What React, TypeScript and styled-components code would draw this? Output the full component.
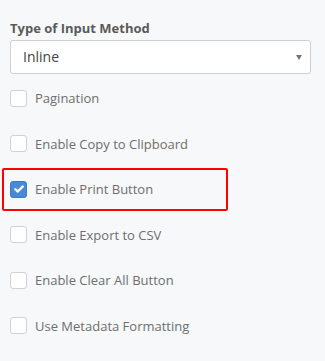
import React from "react";
import styled, { createGlobalStyle } from "styled-components";

const Global = createGlobalStyle`
  html, body { margin: 0; padding: 0; background: #f7f8fa; }
  body { font-family: "Open Sans", "Liberation Sans", sans-serif; }
`;

const Panel = styled.div`
  width: 325px;
  height: 361px;
  box-sizing: border-box;
  padding: 19px 14px 0 10px;
  background: #f7f8fa;
`;

const FieldLabel = styled.div`
  font-size: 13px;
  font-weight: 700;
  line-height: 18px;
  color: #5a5a5a;
  margin-bottom: 3px;
`;

const SelectBox = styled.div`
  position: relative;
  height: 34px;
  box-sizing: border-box;
  border: 1px solid #cfcfcf;
  border-radius: 3px;
  background: #fff;
  display: flex;
  align-items: center;
  padding: 0 0 2px 12px;
  font-size: 14px;
  color: #444;
`;

const Caret = styled.span`
  margin-left: auto;
  margin-right: 8px;
  margin-top: 2px;
  width: 0;
  height: 0;
  border-left: 3.5px solid transparent;
  border-right: 3.5px solid transparent;
  border-top: 5px solid #777;
`;

const List = styled.div`
  display: flex;
  flex-direction: column;
  gap: 25.6px;
  margin-top: 14px;
`;

const Row = styled.label<{ $highlight?: boolean }>`
  position: relative;
  display: flex;
  align-items: center;
  height: 20px;
  font-size: 13px;
  color: #6e6e6e;
  ${(p) =>
    p.$highlight &&
    `
    &::after {
      content: "";
      position: absolute;
      left: -8px;
      top: -11px;
      width: 226px;
      height: 43px;
      box-sizing: border-box;
      border: 2px solid #f00;
      border-radius: 2px;
    }
  `}
`;

const Box = styled.span<{ $checked?: boolean }>`
  width: 17px;
  height: 17px;
  box-sizing: border-box;
  border-radius: 3px;
  border: 1px solid ${(p) => (p.$checked ? "#3b7ac4" : "#d2d2d2")};
  background: ${(p) => (p.$checked ? "#4689d6" : "#fff")};
  margin-right: 8px;
  display: flex;
  align-items: center;
  justify-content: center;
  flex: none;
`;

const items = [
  { text: "Pagination" },
  { text: "Enable Copy to Clipboard" },
  { text: "Enable Print Button", checked: true, highlight: true },
  { text: "Enable Export to CSV" },
  { text: "Enable Clear All Button" },
  { text: "Use Metadata Formatting" },
];

export default function App() {
  return (
    <>
      <Global />
      <Panel>
        <FieldLabel>Type of Input Method</FieldLabel>
        <SelectBox>
          Inline
          <Caret />
        </SelectBox>
        <List>
          {items.map((it) => (
            <Row key={it.text} $highlight={it.highlight}>
              <Box $checked={it.checked}>
                {it.checked && (
                  <svg width="10" height="8" viewBox="0 0 10 8">
                    <path d="M1.3 4.2 L3.9 6.5 L8.7 1.5" fill="none" stroke="#fff" strokeWidth="2.4" strokeLinecap="round" strokeLinejoin="round" />
                  </svg>
                )}
              </Box>
              {it.text}
            </Row>
          ))}
        </List>
      </Panel>
    </>
  );
}
